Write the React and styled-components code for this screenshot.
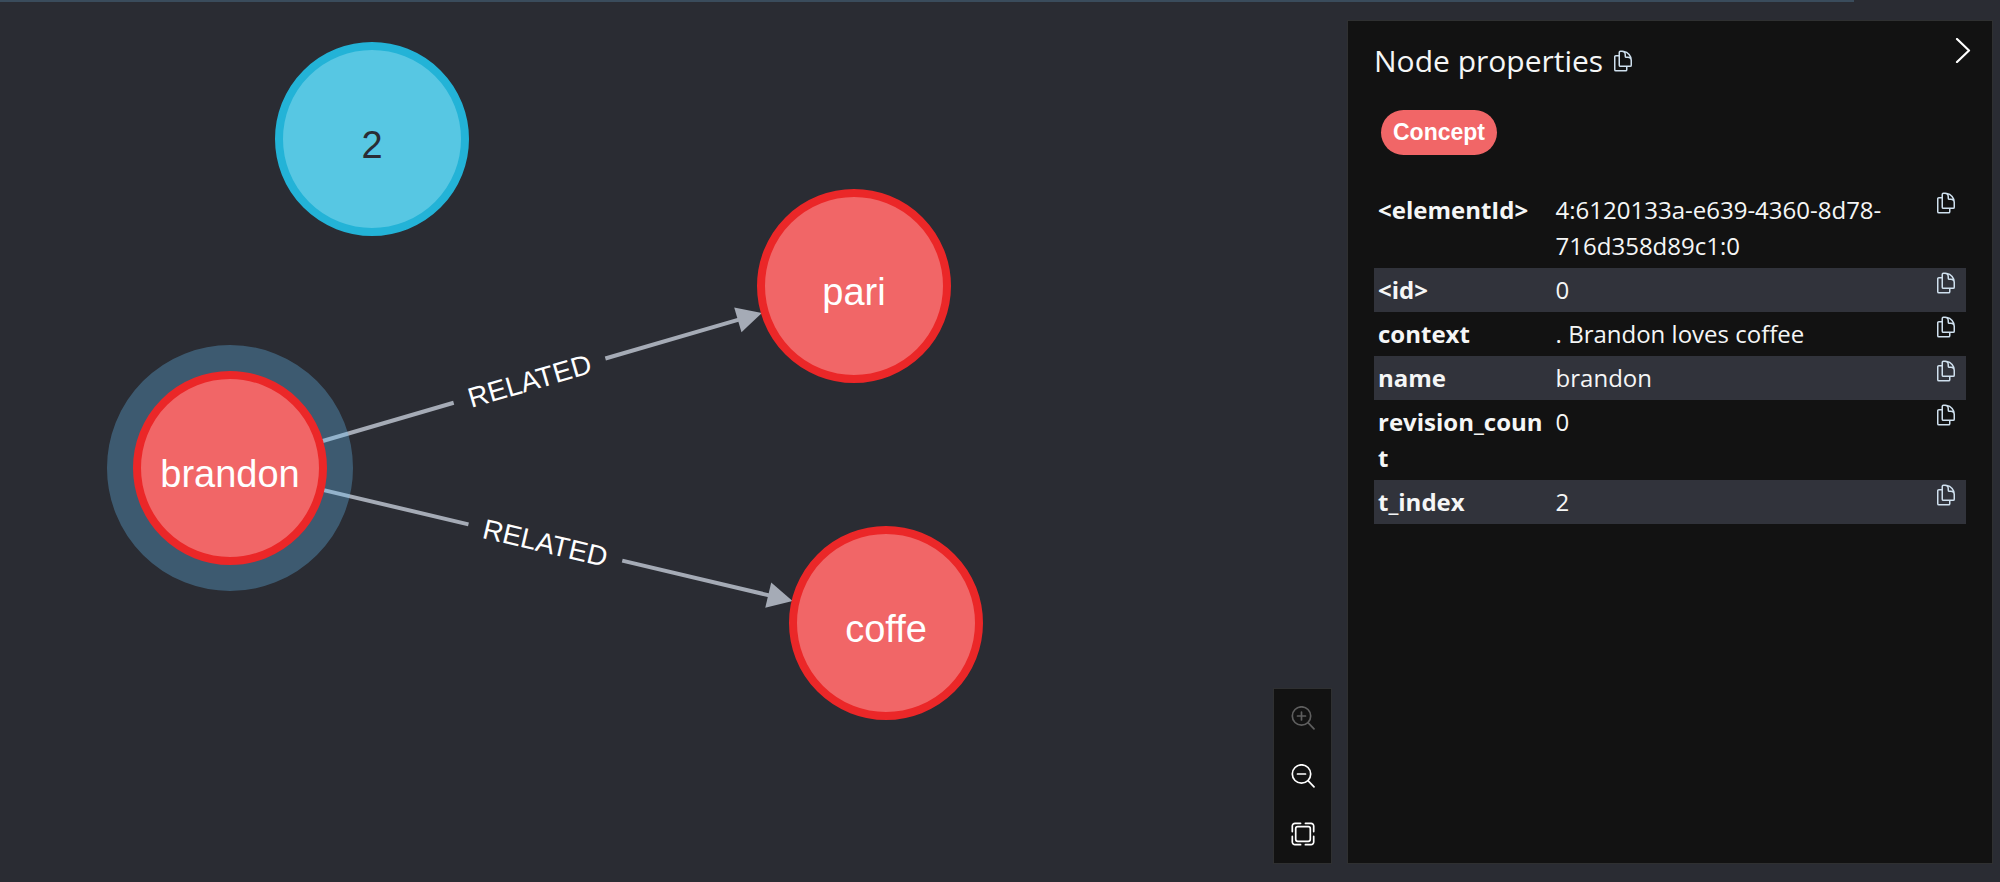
import React from 'react'
import styled, { createGlobalStyle } from 'styled-components'
import { HiOutlineDocumentDuplicate } from 'react-icons/hi2'

const GlobalStyle = createGlobalStyle`
    * {
        box-sizing: border-box;
    }
    body {
        margin: 0;
        background: #2a2c33;
        color: #f5f6f6;
        font-family: "Open Sans", "Noto Sans", sans-serif;
    }
`;
const Page = styled.div`
    display: flex;
    flex-direction: column;
    min-height: 100vh;
`;
const TopLine = styled.div`
    width: 92.7%;
    height: 2px;
    background: #3a4c5c;
`;
const Main = styled.main`
    flex: 1;
    display: flex;
    gap: 15px;
    padding-right: 7px;
`;
const Canvas = styled.svg`
    flex: 1;
    min-width: 0;
    margin-right: -15px;
    font-family: "Liberation Sans", Arial, sans-serif;
`;
const NodeCircle = styled.circle`
    fill: ${props => props.$fill};
    stroke: ${props => props.$stroke};
    stroke-width: 8;
`;
const NodeText = styled.text`
    fill: ${props => props.$color};
    font-size: 38px;
    text-anchor: middle;
`;
const EdgeText = styled.text`
    fill: #ffffff;
    font-size: 28px;
    text-anchor: middle;
`;
const Toolbar = styled.div`
    align-self: flex-end;
    display: flex;
    flex-direction: column;
    width: 59px;
    margin-bottom: 18px;
    background: #121212;
    border: 1px solid #2f3031;
`;
const ToolButton = styled.button`
    display: flex;
    align-items: center;
    justify-content: center;
    height: 58px;
    padding: 0;
    border: none;
    background: none;
    color: #ffffff;

    &:disabled {
        color: #5e5e5e;
    }
`;
const Panel = styled.aside`
    flex: 0 0 646px;
    margin: 18px 0;
    padding: 17px 26px;
    background: #121212;
    border: 1px solid #2f3031;
`;
const PanelHeader = styled.header`
    display: flex;
    align-items: flex-start;
    justify-content: space-between;
`;
const Title = styled.h2`
    display: flex;
    align-items: center;
    gap: 8px;
    margin: 0;
    font-size: 30px;
    font-weight: 400;
    line-height: 46px;
`;
const IconButton = styled.button`
    display: block;
    padding: 0;
    border: none;
    background: none;
    color: #cfe0ee;

    svg {
        display: block;
    }
`;
const CloseButton = styled(IconButton)`
    margin-right: -8px;
    color: #ffffff;
`;
const Chip = styled.button`
    height: 45px;
    margin: 26px 7px 33px;
    padding: 0 12px;
    border: none;
    border-radius: 23px;
    background: #f16667;
    color: #ffffff;
    font-family: "Liberation Sans", Arial, sans-serif;
    font-size: 23px;
    font-weight: 700;
`;
const Properties = styled.table`
    width: 100%;
    table-layout: fixed;
    border-collapse: collapse;
    font-size: 24px;
    line-height: 36px;
`;
const Row = styled.tr`
    vertical-align: top;

    &:nth-child(even) {
        background: #31333b;
    }
`;
const Key = styled.th`
    width: 30%;
    padding: 4px;
    font-weight: 700;
    text-align: left;
    word-break: break-all;
`;
const Value = styled.td`
    padding: 4px;
`;
const CopyCell = styled.td`
    width: 32px;
    padding: 3px 0;
`;

const RADIUS = 97;
const ARROW = 25;
const GAP = 158;

const red = { fill: '#f16667', stroke: '#eb2728', color: '#ffffff' };
const blue = { fill: '#57c7e3', stroke: '#23b3d7', color: '#2a2c34' };

const nodes = {
    two: { label: '2', x: 372, y: 137, ...blue },
    pari: { label: 'pari', x: 854, y: 284, ...red },
    brandon: { label: 'brandon', x: 230, y: 466, selected: true, ...red },
    coffe: { label: 'coffe', x: 886, y: 621, ...red },
};
const edges = [
    { from: 'brandon', to: 'pari', label: 'RELATED' },
    { from: 'brandon', to: 'coffe', label: 'RELATED' },
];
const properties = [
    ['<elementId>', '4:6120133a-e639-4360-8d78-716d358d89c1:0'],
    ['<id>', '0'],
    ['context', '. Brandon loves coffee'],
    ['name', 'brandon'],
    ['revision_count', '0'],
    ['t_index', '2'],
];

// Drawn along the x axis, then turned towards the target node
function Edge ({ from, to, label }) {
    const dx = to.x - from.x
    const dy = to.y - from.y
    const angle = Math.atan2(dy, dx) * 180 / Math.PI
    const tip = Math.hypot(dx, dy) - RADIUS + 1
    const end = tip - ARROW
    const middle = (RADIUS + end) / 2 - 1

    return (
        <g transform={`translate(${from.x} ${from.y}) rotate(${angle})`}>
            <path
                d={`M${RADIUS - 4} 0H${middle - GAP / 2}M${middle + GAP / 2} 0H${end + 1}`}
                stroke="#a5abb6"
                strokeWidth="4"
            />
            <path d={`M${tip} 0L${end} -13V13Z`} fill="#a5abb6" />
            <EdgeText x={middle} y="10">{label}</EdgeText>
        </g>
    )
}

function Node ({ node }) {
    return (
        <g>
            {node.selected && (
                <circle cx={node.x} cy={node.y} r="109" fill="none" stroke="#6ac6ff" strokeOpacity="0.3" strokeWidth="28" />
            )}
            <NodeCircle cx={node.x} cy={node.y} r={RADIUS - 4} $fill={node.fill} $stroke={node.stroke} />
            <NodeText x={node.x} y={node.y + 19} $color={node.color}>{node.label}</NodeText>
        </g>
    )
}

function Glass ({ children }) {
    return (
        <svg width="24" height="24" fill="none" stroke="currentColor" strokeWidth="1.7" strokeLinecap="round">
            <circle cx="10.5" cy="10" r="9.2" />
            <path d="M17 16.6L23 22.8" />
            {children}
        </svg>
    )
}

function CopyButton ({ label }) {
    return (
        <IconButton aria-label={label}>
            <HiOutlineDocumentDuplicate size={24} />
        </IconButton>
    )
}

export default function App () {

return (
    <Page>
        <GlobalStyle />
        <TopLine />

        <Main>
            <Canvas>
                {edges.map(edge => (
                    <Edge key={edge.to} from={nodes[edge.from]} to={nodes[edge.to]} label={edge.label} />
                ))}
                {Object.values(nodes).map(node => (
                    <Node key={node.label} node={node} />
                ))}
            </Canvas>

            <Toolbar>
                <ToolButton aria-label="Zoom in" disabled>
                    <Glass><path d="M6.5 10H14.5M10.5 6V14" /></Glass>
                </ToolButton>
                <ToolButton aria-label="Zoom out">
                    <Glass><path d="M6.5 10H14.5" /></Glass>
                </ToolButton>
                <ToolButton aria-label="Zoom to fit">
                    <svg width="24" height="24" fill="none" stroke="currentColor" strokeWidth="1.7" strokeLinecap="round">
                        <rect x="4.7" y="4.7" width="14.6" height="14.6" rx="2" />
                        <path d="M1.3 9.6V4A2.7 2.7 0 0 1 4 1.3H9.6M14.4 1.3H20A2.7 2.7 0 0 1 22.7 4V9.6M22.7 14.4V20A2.7 2.7 0 0 1 20 22.7H14.4M9.6 22.7H4A2.7 2.7 0 0 1 1.3 20V14.4" />
                    </svg>
                </ToolButton>
            </Toolbar>

            <Panel>
                <PanelHeader>
                    <Title>
                        Node properties
                        <CopyButton label="Copy all properties" />
                    </Title>
                    <CloseButton aria-label="Hide panel">
                        <svg width="20" height="25" fill="none" stroke="currentColor" strokeWidth="2.2" strokeLinecap="round" strokeLinejoin="round">
                            <path d="M3 1L15 12.5L3 24" />
                        </svg>
                    </CloseButton>
                </PanelHeader>

                <Chip>Concept</Chip>

                <Properties>
                    <tbody>
                        {properties.map(([name, value]) => (
                            <Row key={name}>
                                <Key scope="row">{name}</Key>
                                <Value>{value}</Value>
                                <CopyCell><CopyButton label={`Copy ${name}`} /></CopyCell>
                            </Row>
                        ))}
                    </tbody>
                </Properties>
            </Panel>
        </Main>
    </Page>
)
}
